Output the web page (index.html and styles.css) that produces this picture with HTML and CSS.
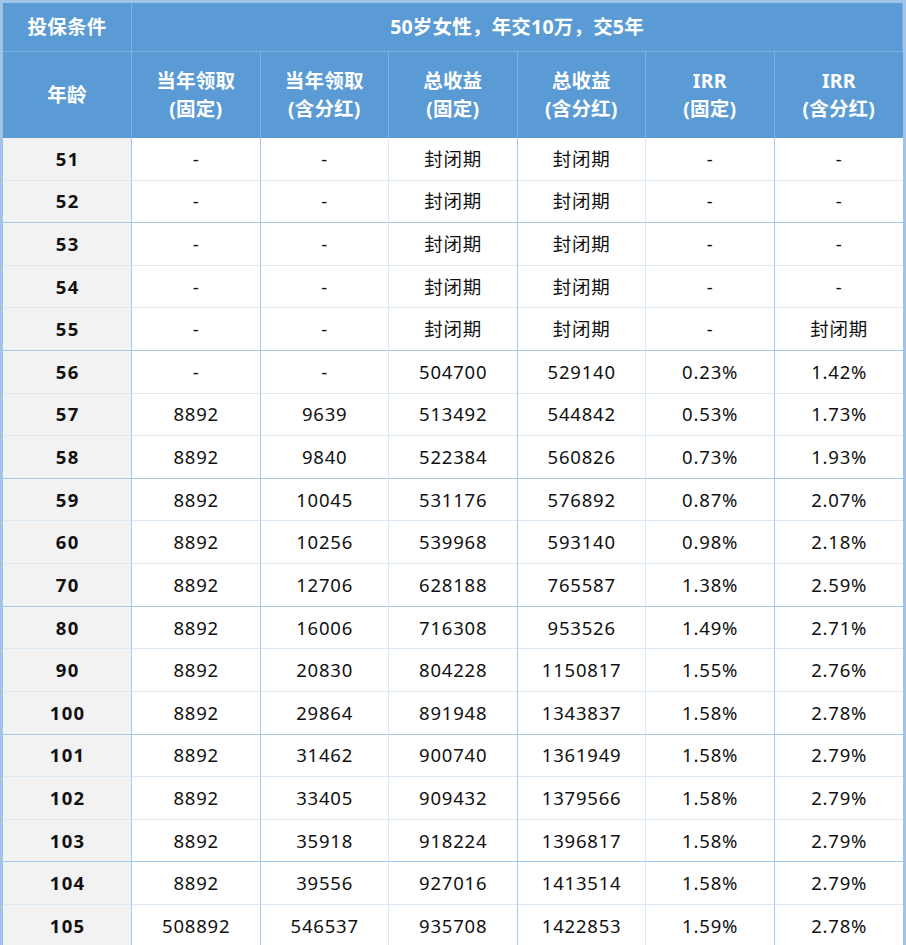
FILE: index.html
```html
<!DOCTYPE html>
<html lang="zh-CN">
<head>
<meta charset="utf-8">
<title>投保条件</title>
<link rel="stylesheet" href="styles.css">
</head>
<body>
<div class="frame">
<table class="grid">
  <colgroup>
    <col class="c-age">
    <col class="c"><col class="c"><col class="c"><col class="c"><col class="c"><col class="c">
  </colgroup>
  <thead>
    <tr class="h1">
      <th class="dk">投保条件</th>
      <th colspan="6">50岁女性，年交10万，交5年</th>
    </tr>
    <tr class="h2">
      <th class="dk">年龄</th>
      <th>当年领取<br>(固定)</th>
      <th class="dk">当年领取<br>(含分红)</th>
      <th>总收益<br>(固定)</th>
      <th class="dk">总收益<br>(含分红)</th>
      <th>IRR<br>(固定)</th>
      <th class="last">IRR<br>(含分红)</th>
    </tr>
  </thead>
  <tbody>
    <tr><td class="age">51</td><td>-</td><td class="dk">-</td><td>封闭期</td><td class="dk">封闭期</td><td>-</td><td class="last">-</td></tr>
    <tr class="rdk"><td class="age">52</td><td>-</td><td class="dk">-</td><td>封闭期</td><td class="dk">封闭期</td><td>-</td><td class="last">-</td></tr>
    <tr><td class="age">53</td><td>-</td><td class="dk">-</td><td>封闭期</td><td class="dk">封闭期</td><td>-</td><td class="last">-</td></tr>
    <tr><td class="age">54</td><td>-</td><td class="dk">-</td><td>封闭期</td><td class="dk">封闭期</td><td>-</td><td class="last">-</td></tr>
    <tr class="rdk"><td class="age">55</td><td>-</td><td class="dk">-</td><td>封闭期</td><td class="dk">封闭期</td><td>-</td><td class="last">封闭期</td></tr>
    <tr><td class="age">56</td><td>-</td><td class="dk">-</td><td>504700</td><td class="dk">529140</td><td>0.23%</td><td class="last">1.42%</td></tr>
    <tr><td class="age">57</td><td>8892</td><td class="dk">9639</td><td>513492</td><td class="dk">544842</td><td>0.53%</td><td class="last">1.73%</td></tr>
    <tr class="rdk"><td class="age">58</td><td>8892</td><td class="dk">9840</td><td>522384</td><td class="dk">560826</td><td>0.73%</td><td class="last">1.93%</td></tr>
    <tr><td class="age">59</td><td>8892</td><td class="dk">10045</td><td>531176</td><td class="dk">576892</td><td>0.87%</td><td class="last">2.07%</td></tr>
    <tr><td class="age">60</td><td>8892</td><td class="dk">10256</td><td>539968</td><td class="dk">593140</td><td>0.98%</td><td class="last">2.18%</td></tr>
    <tr class="rdk"><td class="age">70</td><td>8892</td><td class="dk">12706</td><td>628188</td><td class="dk">765587</td><td>1.38%</td><td class="last">2.59%</td></tr>
    <tr><td class="age">80</td><td>8892</td><td class="dk">16006</td><td>716308</td><td class="dk">953526</td><td>1.49%</td><td class="last">2.71%</td></tr>
    <tr><td class="age">90</td><td>8892</td><td class="dk">20830</td><td>804228</td><td class="dk">1150817</td><td>1.55%</td><td class="last">2.76%</td></tr>
    <tr class="rdk"><td class="age">100</td><td>8892</td><td class="dk">29864</td><td>891948</td><td class="dk">1343837</td><td>1.58%</td><td class="last">2.78%</td></tr>
    <tr><td class="age">101</td><td>8892</td><td class="dk">31462</td><td>900740</td><td class="dk">1361949</td><td>1.58%</td><td class="last">2.79%</td></tr>
    <tr><td class="age">102</td><td>8892</td><td class="dk">33405</td><td>909432</td><td class="dk">1379566</td><td>1.58%</td><td class="last">2.79%</td></tr>
    <tr class="rdk"><td class="age">103</td><td>8892</td><td class="dk">35918</td><td>918224</td><td class="dk">1396817</td><td>1.58%</td><td class="last">2.79%</td></tr>
    <tr><td class="age">104</td><td>8892</td><td class="dk">39556</td><td>927016</td><td class="dk">1413514</td><td>1.58%</td><td class="last">2.79%</td></tr>
    <tr class="end"><td class="age">105</td><td>508892</td><td class="dk">546537</td><td>935708</td><td class="dk">1422853</td><td>1.59%</td><td class="last">2.78%</td></tr>
  </tbody>
</table>
</div>
</body>
</html>
```

FILE: styles.css
```css
html, body {
  margin: 0;
  padding: 0;
  background: #ffffff;
}

body {
  font-family: "Noto Sans", "Noto Sans CJK SC", sans-serif;
  color: #111;
}

.frame {
  width: 900px;
  height: 942px;
  border-top: 3px solid #9fc4e8;
  border-left: 3px solid #9fc4e8;
  border-right: 3px solid #9fc4e8;
  overflow: hidden;
}

.grid {
  width: 900px;
  table-layout: fixed;
  border-collapse: separate;
  border-spacing: 0;
}

.c-age { width: 129px; }
.c { width: 128.5px; }

th, td {
  padding: 0;
  text-align: center;
  vertical-align: middle;
  box-sizing: border-box;
}

th {
  background: #5b9bd5;
  color: #ffffff;
  font-weight: 700;
  font-size: 19.5px;
  line-height: 28px;
  letter-spacing: 0.2px;
  border-right: 1px solid #7fb0e2;
  border-bottom: 1px solid #7fb0e2;
}

.h1 th { height: 49px; }
.h2 th { height: 86px; border-bottom: none; }
th.last { border-right: none; }

td {
  height: 42.62px;
  font-size: 18.5px;
  line-height: 24px;
  letter-spacing: 0.8px;
  padding-left: 0.8px;
  color: #111;
  border-right: 1px solid #a6c8ec;
  border-bottom: 1px solid #dde8f5;
}

td.dk { border-right-color: #dde8f5; }
td.last { border-right: none; }

tr.rdk td { border-bottom-color: #a6c8ec; }
tr.end td { border-bottom: none; }

td.age {
  background: #f2f2f2;
  font-weight: 700;
  letter-spacing: 1.3px;
  padding-left: 1.3px;
  color: #111;
}
```
